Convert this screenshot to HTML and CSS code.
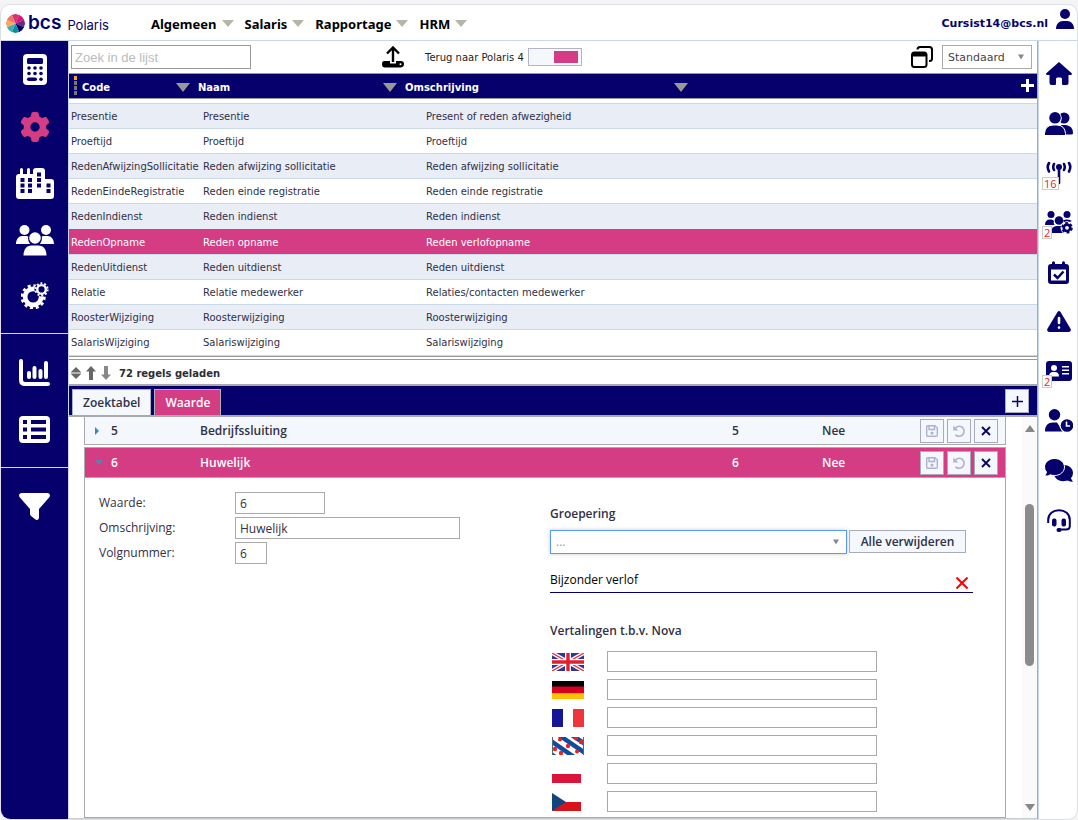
FILE: index.html
```html
<!DOCTYPE html>
<html lang="nl">
<head>
<meta charset="utf-8">
<title>bcs Polaris</title>
<link rel="stylesheet" href="styles.css">
</head>
<body>
<div class="app">
  <header class="topbar">
    <div class="logo">
      <svg class="logo-mark" viewBox="-10 -10 20 20" width="19" height="19">
        <path fill="#d6336c" d="M0 0L-4 -9.200A10 10 0 0 1 4 -9.200Z"/>
        <path fill="#e0107e" d="M0 0L4 -9.200A10 10 0 0 1 9.200 -4Z"/>
        <path fill="#6b2a80" d="M0 0L9.200 -4A10 10 0 0 1 9.200 4Z"/>
        <path fill="#06006c" d="M0 0L9.200 4A10 10 0 0 1 4 9.200Z"/>
        <path fill="#0f8d97" d="M0 0L4 9.200A10 10 0 0 1 -4 9.200Z"/>
        <path fill="#3aaebc" d="M0 0L-4 9.200A10 10 0 0 1 -9.200 4Z"/>
        <path fill="#f9a860" d="M0 0L-9.200 4A10 10 0 0 1 -9.200 -4Z"/>
        <path fill="#ee7468" d="M0 0L-9.200 -4A10 10 0 0 1 -4 -9.200Z"/>
      </svg>
      <span class="logo-name">bcs</span><span class="logo-product">Polaris</span>
    </div>
    <nav class="menu">
      <a href="#">Algemeen<i class="tri"></i></a>
      <a href="#">Salaris<i class="tri"></i></a>
      <a href="#">Rapportage<i class="tri"></i></a>
      <a href="#">HRM<i class="tri"></i></a>
    </nav>
    <a class="user" href="#">Cursist14@bcs.nl
      <svg viewBox="0 0 18 20" width="18" height="20"><circle cx="9" cy="5" r="5"/><path d="M0 20c0-5 3-8 7-8h4c4 0 7 3 7 8z"/></svg>
    </a>
  </header>

  <div class="body">
    <aside class="side">
      <div class="side-group">
        <button aria-label="Salaris"><svg viewBox="0 0 24 32" width="24" height="32"><rect width="24" height="31" rx="4" fill="#fff"/><g fill="#06006c"><rect x="4" y="4" width="16" height="6" rx="1.5"/><circle cx="6" cy="14" r="1.8"/><circle cx="12" cy="14" r="1.8"/><circle cx="18" cy="14" r="1.8"/><circle cx="6" cy="19.500" r="1.800"/><circle cx="12" cy="19.500" r="1.800"/><circle cx="18" cy="19.500" r="1.800"/><rect x="4" y="23.500" width="10" height="3.500" rx="1.700"/><circle cx="18" cy="25.300" r="1.800"/></g></svg></button>
        <button aria-label="Instellingen"><svg viewBox="0 0 512 512" width="30" height="30"><path fill="#d43d83" d="M495.9 166.6c3.2 8.7 .5 18.4-6.4 24.6l-43.3 39.4c1.1 8.3 1.7 16.8 1.7 25.4s-.6 17.1-1.7 25.4l43.3 39.4c6.9 6.2 9.6 15.9 6.4 24.6c-4.4 11.900-9.700 23.300-15.800 34.300l-4.700 8.100c-6.600 11-14 21.400-22.100 31.200c-5.900 7.200-15.700 9.600-24.500 6.800l-55.700-17.700c-13.400 10.300-28.200 18.900-44 25.400l-12.500 57.100c-2 9.100-9 16.300-18.200 17.800c-13.800 2.300-28 3.500-42.500 3.500s-28.700-1.200-42.500-3.500c-9.200-1.500-16.200-8.700-18.200-17.800l-12.500-57.100c-15.800-6.500-30.600-15.100-44-25.400L83.1 425.900c-8.800 2.800-18.600 .3-24.500-6.800c-8.100-9.800-15.500-20.200-22.100-31.200l-4.700-8.100c-6.100-11-11.400-22.400-15.800-34.300c-3.200-8.700-.5-18.400 6.400-24.600l43.300-39.400C64.600 273.100 64 264.600 64 256s.6-17.100 1.700-25.400L22.400 191.200c-6.900-6.200-9.600-15.900-6.400-24.600c4.400-11.900 9.700-23.300 15.800-34.300l4.700-8.100c6.600-11 14-21.400 22.100-31.200c5.900-7.200 15.700-9.600 24.500-6.800l55.700 17.700c13.400-10.300 28.200-18.900 44-25.400l12.500-57.100c2-9.100 9-16.300 18.200-17.800C227.300 1.200 241.500 0 256 0s28.700 1.200 42.500 3.500c9.200 1.500 16.200 8.700 18.200 17.800l12.500 57.100c15.800 6.500 30.600 15.100 44 25.400l55.700-17.700c8.800-2.800 18.600-.3 24.500 6.800c8.100 9.800 15.500 20.200 22.100 31.200l4.700 8.100c6.100 11 11.400 22.400 15.800 34.300zM256 336a80 80 0 1 0 0-160 80 80 0 1 0 0 160z"/></svg></button>
        <button aria-label="Bedrijven"><svg viewBox="0 0 38 31" width="38" height="31"><path fill="#fff" d="M0 28V9Q0 6 3 6H4V1.500Q4 0 5.500 0T7 1.500V6H11V1.500Q11 0 12.500 0T14 1.500V6H17V3Q17 0 20 0H26Q29 0 29 3V11H35Q38 11 38 14V28Q38 31 35 31H3Q0 31 0 28Z"/><path fill="#06006c" d="M4.500 10h4v4h-4zM12 10h4v4h-4zM4.500 15.500h4v4h-4zM12 15.500h4v4h-4zM4.500 21h4v4h-4zM12 21h4v4h-4zM21 4.500h4v4h-4zM21 10h4v4h-4zM21 15.500h4v4h-4zM30.500 15.500h4v4h-4zM30.500 21h4v4h-4z"/></svg></button>
        <button aria-label="Medewerkers"><svg viewBox="0 0 38 31" width="38" height="31" fill="#fff"><circle cx="8.500" cy="5" r="5"/><circle cx="30" cy="5" r="5"/><path d="M0 19c0-5 3-8 6-8h4q2 0 3 1-1 4 1 7zM38 19c0-5-3-8-6-8h-4q-2 0-3 1 1 4-1 7z"/><circle cx="19" cy="13" r="7" fill="#06006c"/><circle cx="19" cy="13" r="5.800"/><path d="M7.500 30.500c0-6 3-10 8-10h7c5 0 8 4 8 10z"/></svg></button>
        <button aria-label="Processen"><svg viewBox="0 0 30 30" width="28" height="28" fill="none" stroke="#fff"><circle cx="13" cy="17" r="8.600" stroke-width="5"/><circle cx="13" cy="17" r="12" stroke-width="3" stroke-dasharray="3.280 3"/><circle cx="22" cy="9" r="7.600" fill="#06006c" stroke="none"/><circle cx="22" cy="9" r="4.600" stroke-width="2.600"/><circle cx="22" cy="9" r="6.600" stroke-width="2" stroke-dasharray="2.100 2.050"/></svg></button>
      </div>
      <div class="side-group">
        <button aria-label="Grafieken"><svg viewBox="0 0 31 27" width="31" height="27" fill="none" stroke="#fff" stroke-width="4" stroke-linecap="round"><path d="M2 2V21Q2 25 6 25H29M10 14V18M15.500 9V18M21.500 12V18M27 4V18"/></svg></button>
        <button aria-label="Lijsten"><svg viewBox="0 0 31 27" width="31" height="27"><rect width="31" height="27" rx="4" fill="#fff"/><path fill="#06006c" d="M4 4h4v4H4zM12 4h15v4H12zM4 11.500h4v4H4zM12 11.500h15v4H12zM4 19h4v4H4zM12 19h15v4H12z"/></svg></button>
      </div>
      <div class="side-group">
        <button aria-label="Filter"><svg viewBox="0 0 31 27" width="31" height="27"><path fill="#fff" d="M2 0H29Q32 1 30.500 4L20 16V25Q19 28 16.500 26.500L12 23Q11 22 11 21V16L.5 4Q-1 1 2 0Z"/></svg></button>
      </div>
    </aside>

    <main class="main">
      <div class="toolbar">
        <input class="search" type="text" placeholder="Zoek in de lijst" aria-label="Zoek in de lijst">
        <button class="upload" aria-label="Exporteren"><svg viewBox="0 0 22 22" width="22" height="22"><path fill="none" stroke="#000" stroke-width="2.400" d="M11 16V2M5 7.500L11 1.500L17 7.500"/><path d="M3 15H8V17.500H14V15H19Q22 15 22 18T19 21.500H3Q0 21.500 0 18T3 15Z"/><circle cx="18.500" cy="18.300" r="1" fill="#fff"/></svg></button>
        <label class="switch">Terug naar Polaris 4<input type="checkbox" role="switch" checked></label>
        <button class="windows" aria-label="Vensters"><svg viewBox="0 0 22 22" width="22" height="22" fill="none" stroke="#000" stroke-width="2"><path d="M6.500 3.500Q6.500 1 9 1H18.500Q21 1 21 3.500V12.500Q21 15 18.500 15H18"/><rect x="1" y="6.500" width="14.500" height="14.500" rx="2.500"/><path stroke-width="4" d="M1.500 8.500H15"/></svg></button>
        <span class="pick view"><select aria-label="Weergave"><option>Standaard</option></select></span>
      </div>

      <div class="list-head">
        <span class="grip"></span>
        <button class="h-code">Code<i class="tri"></i></button>
        <button class="h-naam">Naam<i class="tri"></i></button>
        <button class="h-oms">Omschrijving<i class="tri"></i></button>
        <button class="add-col" aria-label="Kolom toevoegen"><svg viewBox="0 0 13 13" width="13" height="13"><path stroke="#fff" stroke-width="3" d="M6.500 0V13M0 6.500H13"/></svg></button>
      </div>

      <div class="list">
        <table>
          <colgroup><col class="c1"><col class="c2"><col></colgroup>
          <tbody>
            <tr><td>Presentie</td><td>Presentie</td><td>Present of reden afwezigheid</td></tr>
            <tr><td>Proeftijd</td><td>Proeftijd</td><td>Proeftijd</td></tr>
            <tr><td>RedenAfwijzingSollicitatie</td><td>Reden afwijzing sollicitatie</td><td>Reden afwijzing sollicitatie</td></tr>
            <tr><td>RedenEindeRegistratie</td><td>Reden einde registratie</td><td>Reden einde registratie</td></tr>
            <tr><td>RedenIndienst</td><td>Reden indienst</td><td>Reden indienst</td></tr>
            <tr class="selected"><td>RedenOpname</td><td>Reden opname</td><td>Reden verlofopname</td></tr>
            <tr><td>RedenUitdienst</td><td>Reden uitdienst</td><td>Reden uitdienst</td></tr>
            <tr><td>Relatie</td><td>Relatie medewerker</td><td>Relaties/contacten medewerker</td></tr>
            <tr><td>RoosterWijziging</td><td>Roosterwijziging</td><td>Roosterwijziging</td></tr>
            <tr><td>SalarisWijziging</td><td>Salariswijziging</td><td>Salariswijziging</td></tr>
          </tbody>
        </table>
      </div>

      <div class="status">
        <svg viewBox="0 0 10 14" width="10" height="14" fill="#666"><path d="M5 1L10 6H0ZM0 8H10L5 13ZM0 6.500H10V7.500H0Z"/></svg>
        <svg viewBox="0 0 10 14" width="10" height="14" fill="#666"><path d="M5 0L10 5.500H7V14H3V5.500H0Z"/></svg>
        <svg viewBox="0 0 10 14" width="10" height="14" fill="#888"><path d="M5 14L0 8.500H3V0H7V8.500H10Z"/></svg>
        <span>72 regels geladen</span>
      </div>

      <div class="tabs">
        <button class="tab">Zoektabel</button>
        <button class="tab active">Waarde</button>
        <button class="box add" aria-label="Toevoegen"><svg viewBox="0 0 11 11" width="11" height="11"><path stroke="#06006c" stroke-width="1.500" d="M5.500 0V11M0 5.500H11"/></svg></button>
      </div>

      <div class="detail">
        <div class="records">
          <section class="record clipped">
            <div class="rec-head">
              <i class="arrow right"></i><span class="r-code">5</span><span class="r-name">Bedrijfssluiting</span><span class="r-nr">5</span><span class="r-flag">Nee</span>
              <span class="acts">
                <button class="box" aria-label="Opslaan" disabled><svg viewBox="0 0 12 12" width="12" height="12"><use href="#save"/></svg></button>
                <button class="box" aria-label="Ongedaan maken" disabled><svg viewBox="0 0 12 12" width="12" height="12"><use href="#undo"/></svg></button>
                <button class="box" aria-label="Verwijderen"><svg viewBox="0 0 12 12" width="12" height="12"><use href="#close"/></svg></button>
              </span>
            </div>
          </section>
          <section class="record open">
            <div class="rec-head">
              <i class="arrow down"></i><span class="r-code">6</span><span class="r-name">Huwelijk</span><span class="r-nr">6</span><span class="r-flag">Nee</span>
              <span class="acts">
                <button class="box" aria-label="Opslaan" disabled><svg viewBox="0 0 12 12" width="12" height="12"><use href="#save"/></svg></button>
                <button class="box" aria-label="Ongedaan maken" disabled><svg viewBox="0 0 12 12" width="12" height="12"><use href="#undo"/></svg></button>
                <button class="box" aria-label="Verwijderen"><svg viewBox="0 0 12 12" width="12" height="12"><use href="#close"/></svg></button>
              </span>
            </div>
            <div class="rec-body">
              <div class="fields">
                <label for="waarde">Waarde:</label><input id="waarde" class="w-m" type="text" value="6">
                <label for="oms">Omschrijving:</label><input id="oms" class="w-l" type="text" value="Huwelijk">
                <label for="volg">Volgnummer:</label><input id="volg" class="w-s" type="text" value="6">
              </div>
              <div class="extra">
                <h3>Groepering</h3>
                <div class="group-row">
                  <span class="pick group"><select aria-label="Groepering"><option>...</option></select></span>
                  <button class="clear">Alle verwijderen</button>
                </div>
                <div class="chosen"><span>Bijzonder verlof</span><button aria-label="Bijzonder verlof verwijderen"><svg viewBox="0 0 12 12" width="12" height="12"><path stroke="#f00" stroke-width="2" d="M.5 .5L11.500 11.500M11.500 .5L.5 11.500"/></svg></button></div>
                <h3>Vertalingen t.b.v. Nova</h3>
                <div class="langs">
                  <svg viewBox="0 0 32 18" width="32" height="18"><path fill="#32368f" d="M0 0H32V18H0Z"/><path stroke="#fff" stroke-width="4" d="M0 0L32 18M32 0L0 18"/><path stroke="#e0304a" stroke-width="1.300" d="M0 0L32 18M32 0L0 18"/><path stroke="#fff" stroke-width="6" d="M16 0V18M0 9H32"/><path stroke="#e02030" stroke-width="3.400" d="M16 0V18M0 9H32"/></svg>
                  <input type="text" aria-label="Engels">
                  <svg viewBox="0 0 32 18" width="32" height="18"><path fill="#000" d="M0 0H32V6H0Z"/><path fill="#d80020" d="M0 5.500H32V12.500H0Z"/><path fill="#ffc000" d="M0 12.500H32V18H0Z"/></svg>
                  <input type="text" aria-label="Duits">
                  <svg viewBox="0 0 32 18" width="32" height="18"><path fill="#151596" d="M0 0H11V18H0Z"/><path fill="#ef343c" d="M21 0H32V18H21Z"/></svg>
                  <input type="text" aria-label="Frans">
                  <svg viewBox="0 0 32 18" width="32" height="18"><path fill="#fff" d="M0 0H32V18H0Z"/><path stroke="#0c4da2" stroke-width="4.500" d="M-4 2L22 20M-2 -8L36 18M14 -6L36 9M-8 12L6 22"/><g fill="#f02020"><circle cx="8" cy="2.500" r="2"/><circle cx="16" cy="9" r="2.200"/><circle cx="25" cy="14.500" r="2"/><circle cx="3" cy="12" r="2.200"/><circle cx="9" cy="16" r="2.200"/><circle cx="24" cy="1.500" r="2"/><circle cx="29" cy="5" r="2.200"/></g><path stroke="#567" d="M.5 0V18M31.500 0V18"/></svg>
                  <input type="text" aria-label="Fries">
                  <svg viewBox="0 0 32 18" width="32" height="18"><path fill="#dc143c" d="M0 9H29V18H0Z"/></svg>
                  <input type="text" aria-label="Pools">
                  <svg viewBox="0 0 32 18" width="32" height="18"><path fill="#d7141a" d="M0 9H29V18H0Z"/><path fill="#11457e" d="M0 0L14 9L0 18Z"/></svg>
                  <input type="text" aria-label="Tsjechisch">
                </div>
              </div>
            </div>
          </section>
        </div>
        <div class="scroll"><i class="up"></i><i class="thumb"></i><i class="down"></i></div>
      </div>
    </main>

    <aside class="rail">
      <nav>
      <a href="#" aria-label="Start"><svg viewBox="0 0 26 23" width="26" height="23"><path d="M13 0L26 11.500Q26 13 24.500 13H22.500V21Q22.500 23 20.500 23H17Q16 23 16 22V17Q16 15.500 14.500 15.500H11.500Q10 15.500 10 17V22Q10 23 9 23H5.500Q3.500 23 3.500 21V13H1.500Q0 13 0 11.500Z"/></svg></a>
      <a href="#" aria-label="Relaties"><svg viewBox="0 0 28 23" width="28" height="23"><circle cx="19" cy="6" r="5.500"/><path d="M16 13H21Q28 14 28 21Q28 22.500 26.500 22.500H18Z"/><circle cx="10" cy="6" r="6.800" fill="#fff"/><circle cx="10" cy="5.800" r="5.800"/><path stroke="#fff" d="M-.5 23.500V21.500Q0 13.500 8 13H12Q20 13.500 20.500 21.500V23.500Z"/></svg></a>
      <a href="#" aria-label="Signalen"><svg viewBox="0 0 26 24" width="26" height="24"><circle cx="13" cy="6" r="3"/><path fill="none" stroke="#06006c" stroke-width="2.600" stroke-linecap="round" d="M13 6V22M8 3Q6.500 6 8 9M18 3Q19.500 6 18 9M3 2Q.5 6 3 10.500M23 2Q25.500 6 23 10.500"/></svg><b>16</b></a>
      <a href="#" aria-label="Groepen"><svg viewBox="0 0 28 23" width="28" height="23"><circle cx="6" cy="3.500" r="3.500"/><circle cx="22" cy="3.500" r="3.500"/><path d="M0 14Q0 8.500 5 8.500Q8 8 9 10Q8 12 9.500 14ZM18 9.500Q22 7.500 27 10L20 13Z"/><circle cx="14" cy="9.500" r="4.300"/><path d="M6 22Q6 15 12 15H18L20 22Z"/><circle cx="22" cy="16.800" r="6.500" fill="#fff"/><circle cx="22" cy="16.800" r="3.200" fill="none" stroke="#06006c" stroke-width="2.600"/><circle cx="22" cy="16.800" r="4.900" fill="none" stroke="#06006c" stroke-width="1.800" stroke-dasharray="2.800 2.330"/></svg><b>2</b></a>
      <a href="#" aria-label="Agenda"><svg viewBox="0 0 21 23" width="21" height="23"><path d="M3 3H4V1.500Q5.500-1 7 1.500V3H14V1.500Q15.500-1 17 1.500V3H18Q21 3 21 6V20Q21 23 18 23H3Q0 23 0 20V6Q0 3 3 3Z"/><path fill="#fff" d="M3 8.500H18V19.500H3Z"/><path fill="none" stroke="#06006c" stroke-width="2.500" d="M6 13.500L9.500 17L15.500 10.500"/></svg></a>
      <a href="#" aria-label="Waarschuwingen"><svg viewBox="0 0 24 21" width="24" height="21"><path d="M10.500 1Q12-1 13.500 1L23.700 18Q24.500 20.500 22 21H2Q-.5 20.500 .3 18Z"/><path stroke="#fff" stroke-width="2.600" stroke-linecap="round" d="M12 7V12M12 16.500V16.600"/></svg></a>
      <a href="#" aria-label="Dossier"><svg viewBox="0 0 26 20" width="26" height="20"><rect width="26" height="20" rx="3"/><g fill="#fff"><circle cx="8" cy="7" r="3"/><path d="M3 15.500Q3 11 7 11H9Q13 11 13 15.500ZM16 5H23V6.500H16ZM16 8.500H23V10H16ZM16 12H23V13.500H16Z"/></g></svg><b>2</b></a>
      <a href="#" aria-label="Urenregistratie"><svg viewBox="0 0 28 23" width="28" height="23"><circle cx="9.500" cy="5.700" r="5.700"/><path d="M0 22.500Q0 13.500 8 13.500H12L18 22.500Z"/><circle cx="22" cy="16.500" r="7.500" fill="#fff"/><circle cx="22" cy="16.500" r="6.300"/><path fill="none" stroke="#fff" stroke-width="1.600" d="M21.500 12.500V17H25"/></svg></a>
      <a href="#" aria-label="Berichten"><svg viewBox="0 0 28 24" width="28" height="24"><path d="M18.500 6C24 6 28 9.500 28 14Q28 17 26 19Q26.500 21 28 22.500Q25 23 22.500 21.500Q12.500 24 9.500 17Z"/><path stroke="#fff" d="M9.500-.5C15-.5 19.500 3.500 19.500 8S15.500 16.500 9.500 16.500Q7 16.500 5.500 15.800Q3 17.500-.5 17Q1 15 1.500 13Q-.5 11-.5 8C-.5 3.500 4-.5 9.500-.5Z"/></svg></a>
      <a href="#" aria-label="Helpdesk"><svg viewBox="0 0 24 23" width="24" height="23"><path fill="none" stroke="#06006c" stroke-width="2" d="M1.200 14V11C1.200 5 6 1.200 12 1.200S22.800 5 22.800 11V17Q22.800 20.500 19 20.500H12"/><rect x="5" y="9.500" width="4.500" height="8" rx="2"/><rect x="14.500" y="9.500" width="4.500" height="8" rx="2"/><rect x="9.500" y="19" width="5" height="4" rx="2"/></svg></a>
      </nav>
    </aside>
  </div>
</div>

<svg class="defs" width="0" height="0">
  <defs>
    <g id="save"><path fill="none" stroke="#b0b0d4" stroke-width="1.400" d="M2 .7H9L11.300 3V10Q11.300 11.300 10 11.300H2Q.7 11.300 .7 10V2Q.7 .7 2 .7ZM3 1V4.500H8.500V1"/><circle cx="6" cy="8" r="1.600" fill="#b0b0d4"/></g>
    <g id="undo"><path fill="none" stroke="#b0b0d4" stroke-width="1.600" d="M2 3.500C5-.5 11 1.500 11 6.200C11 11 6 12.500 2.500 10"/><path fill="#b0b0d4" d="M.3 .5V5.500H5.300Z"/></g>
    <g id="close"><path stroke="#06006c" stroke-width="1.800" d="M2 2L10 10M10 2L2 10"/></g>
  </defs>
</svg>
</body>
</html>
```

FILE: styles.css
```css
* { box-sizing: border-box; }

body {
  margin: 0;
  background: #f4f4f4;
  font-family: "DejaVu Sans", Verdana, sans-serif;
  font-size: 10px;
  color: #303048;
}

button, input, select { font: inherit; color: inherit; margin: 0; padding: 0; border: 0; background: none; border-radius: 0; }
button, a { display: inline-flex; align-items: center; justify-content: center; color: inherit; text-decoration: none; }
svg { display: block; flex: none; }
.defs { position: absolute; }

.app {
  display: flex;
  flex-direction: column;
  height: calc(100vh - 4px);
  margin-top: 4px;
  border: 1px solid #dcdfe6;
  border-radius: 10px;
  background: #fff;
  overflow: hidden;
}

/* Top bar */
.topbar {
  display: flex;
  align-items: center;
  height: 36px;
  flex: none;
  padding: 1px 3px 0 5px;
  border-bottom: 1px solid #c9d6e4;
}
.logo { display: flex; align-items: center; width: 145px; color: #06006c; }
.logo-mark { border-radius: 50%; }
.logo-name { margin-left: 3px; font: 600 19px/24px Inter, sans-serif; }
.logo-product { margin: 3px 0 0 6px; font: 13px/20px Inter, sans-serif; }
.menu { display: flex; gap: 11px; flex: 1; padding-top: 1px; font: bold 13px/20px "Noto Sans", sans-serif; color: #000; }
.tri { width: 0; height: 0; border: 6px solid transparent; border-top: 7px solid #b4b6a8; border-bottom: 0; }
.menu .tri { margin-left: 5px; }
.user { gap: 8px; font-size: 11px; font-weight: bold; color: #06006c; }
.user svg { fill: #06006c; margin-bottom: 8px; }

.body { display: flex; flex: 1; min-height: 0; }

/* Left navigation */
.side { width: 67px; flex: none; background: #06006c; }
.side-group { display: flex; flex-direction: column; padding: 10px 0 9px; border-bottom: 1px solid #d5d9ee; }
.side-group:first-child { padding: 0 0 7px; }
.side-group:last-child { border: 0; }
.side-group button { height: 57px; }
.side-group:first-child button:nth-child(n+4) { height: 56px; }
.side-group:first-child button:last-child { height: 58px; padding-bottom: 4px; }

/* Main column */
.main { display: flex; flex-direction: column; flex: 1; min-width: 0; border-left: 1px solid #c9d6e4; border-right: 1px solid #a9a9b8; }
.toolbar { display: flex; align-items: center; height: 32px; padding: 0 5px 0 2px; flex: none; }
.search { width: 180px; height: 24px; padding: 0 3px; border: 1px solid #999; font: 13px "Liberation Sans", sans-serif; }
.search::placeholder { color: #bbb; opacity: 1; }
.upload { margin-left: 131px; }
.switch { display: flex; align-items: center; gap: 4px; margin-left: 21px; color: #222; }
.switch input { appearance: none; width: 54px; height: 18px; border: 1px solid #b4b4c4; background: #f4f8fc; }
.switch input::before { content: ""; display: block; width: 24px; height: 12px; margin: 2px 3px 0 auto; background: #d43d83; }
.windows { margin-left: auto; }

.pick { position: relative; display: flex; }
.pick select { appearance: none; width: 100%; height: 100%; padding: 0 5px; border: 1px solid #aaa; background: #fff; }
.pick::after {
  content: "";
  position: absolute;
  right: 8px;
  top: 50%;
  border: 3px solid transparent;
  border-top: 5px solid #888;
  border-bottom: 0;
  transform: translateY(-50%);
  pointer-events: none;
}
.view { width: 90px; height: 24px; margin-left: 9px; font-size: 11px; color: #444; }

.list-head {
  display: flex;
  align-items: center;
  flex: none;
  height: 26px;
  padding: 2px 3px 0 5px;
  background: #06006c;
  border-top: 1px solid #999;
  border-bottom: 1px solid #999;
  color: #fff;
}
.list-head button { font-weight: bold; }
.list-head .tri { border-width: 7px; border-top: 9px solid #999; border-bottom: 0; }
.grip { width: 3px; height: 19px; margin: 0 5px 3px 0; background: repeating-linear-gradient(transparent 0 4px, #06006c 4px 5px), linear-gradient(#f5a623 0 5px, #777 5px); }
.list-head .h-code, .list-head .h-naam, .list-head .h-oms { justify-content: space-between; }
.h-code { width: 108px; }
.h-naam { width: 199px; margin-left: 8px; }
.h-oms { width: 283px; margin-left: 8px; }
.add-col { margin-left: auto; margin-bottom: 4px; }

.list { flex: none; padding-top: 4px; border-bottom: 1px solid #999; }
.list table { width: 100%; border-collapse: separate; border-spacing: 0; table-layout: fixed; }
.c1 { width: 132px; }
.c2 { width: 222px; }
.list td { height: 25px; padding: 0 2px; border-top: 1px solid #c9d9e6; white-space: nowrap; }
.list tr:nth-child(odd) td { background: #e9edf6; }
.list tr:nth-child(5) td { height: 26px; }
.list .selected td { background: #d43d83; border-color: #d43d83; color: #fff; }
.list tr td:last-child { padding-left: 3px; }
.list tr:last-child td { height: 27px; border-bottom: 1px solid #c9d9e6; }

.status {
  display: flex;
  align-items: center;
  gap: 5px;
  flex: none;
  height: 27px;
  margin-top: 2px;
  padding: 2px 0 0 2px;
  border-top: 1px solid #999;
  border-bottom: 2px solid #aaa;
  font-weight: bold;
  color: #2c2c34;
}
.status span { margin-left: 3px; }

/* Tabs */
.tabs {
  display: flex;
  gap: 3px;
  flex: none;
  height: 31px;
  padding: 3px 8px 0 3px;
  background: #06006c;
  border-bottom: 2px solid #aaa;
  font: 600 12px/16px "Open Sans", sans-serif;
}
.tab { padding: 0 10px; background: #f4f8fc; border: 1px solid #b0b0bc; border-bottom: 0; }
.tab.active { background: #d43d83; color: #fff; }
.box { width: 24px; height: 24px; background: #f4f8fc; border: 1px solid #aaaabf; }
.tabs .add { margin-left: auto; }

/* Record list */
.detail { display: flex; flex: 1; min-height: 0; font: 12px/16px "Open Sans", sans-serif; border-bottom: 1px solid #ccc; }
.records { display: flex; flex-direction: column; gap: 2px; flex: 1; padding: 0 16px 0 15px; }
.record { border: 1px solid #aaa; }
.record.clipped { border-top: 0; }
.record.open { flex: 1; display: flex; flex-direction: column; }
.rec-head { display: flex; align-items: center; height: 29px; padding: 0 7px 0 10px; background: #f4f8fc; font-weight: 600; }
.clipped .rec-head { height: 27px; }
.open .rec-head { background: #d43d83; color: #fff; border-bottom: 1px solid #aaa; height: 30px; }
.arrow { width: 16px; }
.arrow::before { content: ""; display: block; width: 0; border: 4px solid transparent; }
.arrow.right::before { border-left-color: #3a87b8; border-right: 0; }
.arrow.down::before { border-top: 5px solid #5f7fae; border-bottom: 0; }
.r-code { width: 89px; }
.r-name { flex: 1; }
.r-nr { width: 90px; }
.r-flag { width: 98px; }
.acts { display: flex; gap: 3px; }

.rec-body { display: flex; padding-top: 14px; }
.fields { display: grid; grid-template-columns: 136px 1fr; gap: 3px 0; align-content: start; align-items: center; width: 465px; padding-left: 14px; }
.fields input, .langs input { height: 22px; padding: 0 4px; border: 1px solid #aaa; background: #fff; }
.w-m { width: 90px; }
.w-l { width: 225px; }
.w-s { width: 32px; }
.extra { width: 423px; padding-top: 14px; }
.extra h3 { margin: 0; font: 600 12px/16px "Open Sans", sans-serif; }
.group-row { display: flex; gap: 2px; margin-top: 8px; }
.group { width: 297px; height: 24px; color: #999; box-shadow: 0 0 4px #ccc; }
.group select { border-color: #5897fb; }
.clear { width: 117px; height: 23px; background: #f4f8fc; border: 1px solid #aaaabf; font-weight: 600; }
.chosen { display: flex; justify-content: space-between; margin: 18px 0 30px; padding: 0 5px 3px 0; border-bottom: 1px solid #06006c; color: #000; }
.chosen button { padding-top: 5px; }
.langs { display: grid; grid-template-columns: 55px 270px; gap: 7px 0; align-items: center; padding: 12px 0 0 2px; }
.langs input { height: 21px; }

/* Scroll bar */
.scroll { display: flex; flex-direction: column; align-items: center; width: 15px; flex: none; padding: 8px 0 7px; background: #fafafa; }
.scroll .up { border: 5px solid transparent; border-bottom: 7px solid #888; border-top: 0; }
.scroll .thumb { width: 9px; height: 162px; margin-top: 72px; border-radius: 5px; background: #8b8b8b; }
.scroll .down { margin-top: auto; border: 5px solid transparent; border-top: 7px solid #888; border-bottom: 0; }

/* Right rail */
.rail { width: 39px; flex: none; padding: 8px 0 0 1px; border-left: 1px solid #c9d6e4; fill: #06006c; }
.rail nav { display: grid; grid-template-rows: repeat(10, 1fr); height: 496px; }
.rail a { position: relative; }
.rail b {
  position: absolute;
  left: 2px;
  bottom: 8px;
  padding: 0 1px;
  border: 1px solid #ccc;
  background: #fff;
  color: #e8202c;
  font: 11px/11px "Open Sans", sans-serif;
}
```
